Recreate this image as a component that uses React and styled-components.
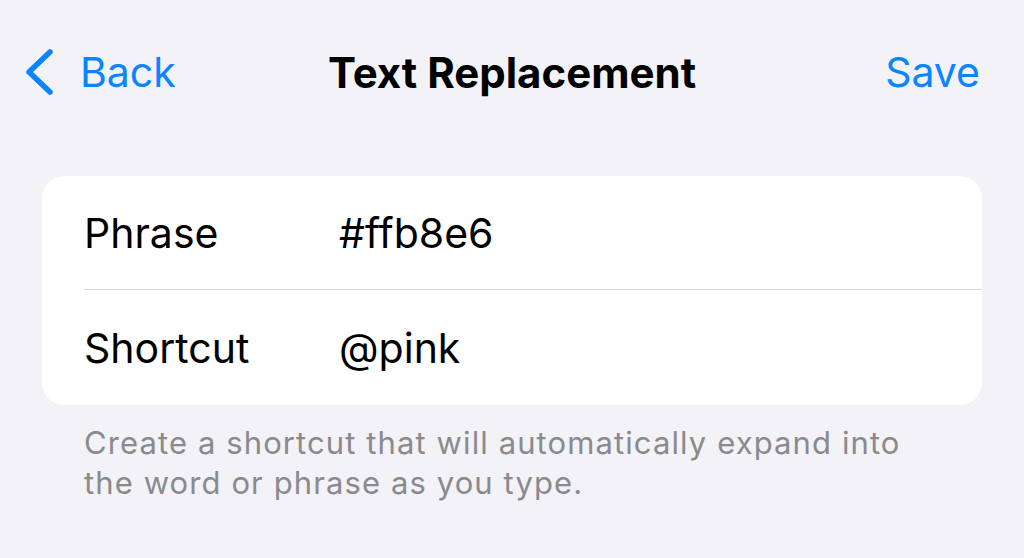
import React from "react";
import styled, { createGlobalStyle } from "styled-components";

const GlobalStyle = createGlobalStyle`
  html, body {
    margin: 0;
    padding: 0;
    background: #f2f2f7;
  }
  body {
    font-family: Inter, "Noto Sans", "Liberation Sans", sans-serif;
    -webkit-font-smoothing: antialiased;
  }
`;

const Screen = styled.div`
  width: 1024px;
  height: 558px;
  background: #f2f2f7;
  overflow: hidden;
`;

const NavBar = styled.div`
  height: 148px;
  display: grid;
  grid-template-columns: 1fr auto 1fr;
  align-items: center;
  padding: 0 24px;
  box-sizing: border-box;
  margin-top: -2px;
`;

const BackButton = styled.div`
  display: flex;
  align-items: center;
  gap: 26px;
  color: #0a84ff;
  font-size: 41px;
  justify-self: start;
`;

const Title = styled.div`
  font-size: 42px;
  font-weight: 700;
  color: #000;
  letter-spacing: 0;
`;

const SaveButton = styled.div`
  justify-self: end;
  margin-right: 20px;
  color: #0a84ff;
  font-size: 41px;
`;

const Card = styled.div`
  margin: 30px 42px 0 42px;
  background: #fff;
  border-radius: 22px;
  overflow: hidden;
`;

const Row = styled.div`
  display: flex;
  align-items: center;
  margin-left: 42px;
  border-bottom: ${(p) => (p.$last ? "none" : "1.5px solid #d8d8dc")};
  box-sizing: border-box;
  height: ${(p) => (p.$last ? "115px" : "114px")};
`;

const Label = styled.div`
  width: 255px;
  font-size: 41px;
  color: #000;
`;

const Value = styled.div`
  font-size: 41px;
  color: #000;
`;

const Footer = styled.div`
  padding: 18px 0 0 84px;
  font-size: 31px;
  line-height: 40px;
  letter-spacing: 1.1px;
  color: #8a8a8e;
  width: 840px;
`;

const Chevron = () => (
  <svg width="30" height="48" viewBox="0 0 30 48">
    <path
      d="M26 4 L5 24 L26 44"
      fill="none"
      stroke="#0a84ff"
      strokeWidth="5.5"
      strokeLinecap="round"
      strokeLinejoin="round"
    />
  </svg>
);

const App = () => {
  return (
    <Screen>
      <GlobalStyle />
      <NavBar>
        <BackButton>
          <Chevron />
          <span>Back</span>
        </BackButton>
        <Title>Text Replacement</Title>
        <SaveButton>Save</SaveButton>
      </NavBar>
      <Card>
        <Row>
          <Label>Phrase</Label>
          <Value>#ffb8e6</Value>
        </Row>
        <Row $last>
          <Label>Shortcut</Label>
          <Value>@pink</Value>
        </Row>
      </Card>
      <Footer>
        Create a shortcut that will automatically expand into the word or
        phrase as you type.
      </Footer>
    </Screen>
  );
};

export default App;
